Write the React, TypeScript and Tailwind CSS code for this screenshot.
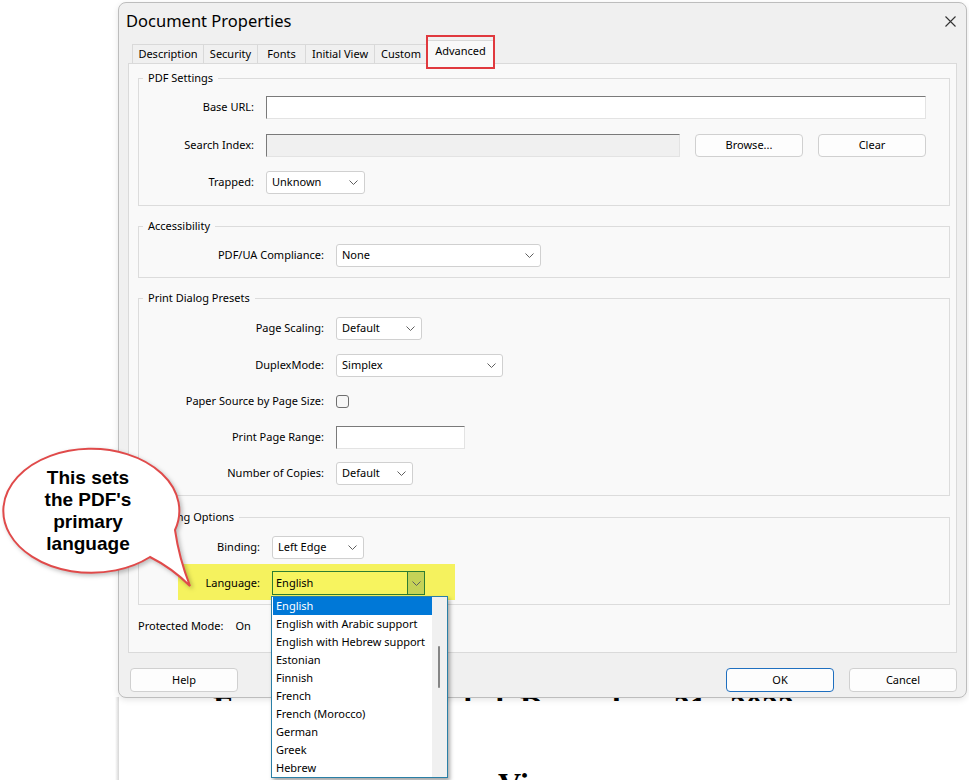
import React from "react";

const languages = [
  "English",
  "English with Arabic support",
  "English with Hebrew support",
  "Estonian",
  "Finnish",
  "French",
  "French (Morocco)",
  "German",
  "Greek",
  "Hebrew",
];

const tabs = [
  { name: "Description", w: "w-[71px]" },
  { name: "Security", w: "w-[54px]" },
  { name: "Fonts", w: "w-[48px]" },
  { name: "Initial View", w: "w-[69px]" },
  { name: "Custom", w: "w-[53px]" },
];

function Chevron() {
  return (
    <svg width="9" height="5" viewBox="0 0 9 5">
      <path d="M0.5 0.5 L4.5 4.5 L8.5 0.5" fill="none" stroke="#5f5f5f" strokeWidth="1" />
    </svg>
  );
}

function Select({ value, width }: { value: string; width: string }) {
  return (
    <div
      className={`flex h-[23px] items-center justify-between rounded-[3px] border border-[#d0d0d0] bg-white pl-[5px] pr-[6px] ${width}`}
    >
      <span>{value}</span>
      <Chevron />
    </div>
  );
}

function Sunken({ width, gray }: { width: string; gray?: boolean }) {
  return (
    <div
      className={`h-[23px] border border-[#e3e3e3] border-l-[#7a7a7a] border-t-[#7a7a7a] ${gray ? "bg-[#f0f0f0]" : "bg-white"} ${width}`}
    />
  );
}

function Button({ label, primary }: { label: string; primary?: boolean }) {
  return (
    <div
      className={`flex h-[24px] w-[108px] items-center justify-center rounded-[4px] border bg-[#fdfdfd] ${primary ? "border-[#1f6fbf]" : "border-[#d0d0d0]"}`}
    >
      {label}
    </div>
  );
}

function Row({
  label,
  labelW,
  children,
  className = "",
}: {
  label: string;
  labelW: string;
  children: React.ReactNode;
  className?: string;
}) {
  return (
    <div className={`flex h-[23px] items-center gap-[12px] ${className}`}>
      <div className={`shrink-0 text-right ${labelW}`}>{label}</div>
      {children}
    </div>
  );
}

function Group({
  title,
  children,
  className = "",
}: {
  title: string;
  children: React.ReactNode;
  className?: string;
}) {
  return (
    <fieldset className={`border border-[#dcdcdc] ${className}`}>
      <legend className="ml-[4px] px-[5px] leading-[16px]">{title}</legend>
      {children}
    </fieldset>
  );
}

export default function App() {
  return (
    <div className="relative h-[780px] w-[969px] overflow-hidden bg-white font-['Noto_Sans',sans-serif] text-[11px] text-black">
      {/* page behind the dialog */}
      <div className="absolute left-[115px] top-[697px] h-[83px] w-[4px] bg-gradient-to-r from-white to-[#d6d6d6]" />
      <div className="absolute left-[213px] top-[691px] h-[10px] overflow-hidden whitespace-nowrap font-['Liberation_Serif',serif] text-[32px] font-bold leading-[32px] [word-spacing:8px]">
        For the Year Ended December 31, 2022
      </div>
      <div className="absolute left-[498px] top-[768px] font-['Liberation_Serif',serif] text-[32px] font-bold leading-[32px]">
        Vi
      </div>

      {/* dialog */}
      <div className="absolute left-[118px] top-[2px] flex h-[696px] w-[849px] flex-col rounded-[8px] border border-[#bdbdbd] bg-[#f0f0f0] shadow-[0_2px_6px_rgba(0,0,0,0.1)]">
        <div className="flex h-[41px] items-center justify-between pb-[5px] pl-[7px] pr-[10px]">
          <span className="text-[16.5px]">Document Properties</span>
          <svg width="11" height="11" viewBox="0 0 11 11">
            <path d="M0.5 0.5 L10.5 10.5 M10.5 0.5 L0.5 10.5" stroke="#333" strokeWidth="1.1" />
          </svg>
        </div>

        {/* tabs */}
        <div className="relative z-10 flex h-[19px] items-end pl-[13px]">
          {tabs.map((t) => (
            <div
              key={t.name}
              className={`flex h-[19px] items-center justify-center border-l border-t border-[#d9d9d9] ${t.w}`}
            >
              {t.name}
            </div>
          ))}
          <div className="-mb-px flex h-[24px] w-[67px] items-center justify-center border-x border-t border-[#d9d9d9] bg-[#f9f9f9] pb-[2px]">
            Advanced
          </div>
        </div>

        {/* tab panel */}
        <div className="ml-[9px] flex h-[590px] w-[829px] flex-col border border-[#dadada] bg-[#f9f9f9] pl-[9px] pr-[6px] pt-[6px]">
          <Group title="PDF Settings">
            <div className="flex flex-col pb-[11px] pt-[10px]">
              <Row label="Base URL:" labelW="w-[115px]">
                <Sunken width="w-[660px]" />
              </Row>
              <Row label="Search Index:" labelW="w-[115px]" className="mt-[15px]">
                <Sunken width="w-[414px]" gray />
                <div className="ml-[3px] flex gap-[15px]">
                  <div className="flex h-[23px] w-[108px] items-center justify-center rounded-[4px] border border-[#d0d0d0] bg-[#fdfdfd]">
                    Browse...
                  </div>
                  <div className="flex h-[23px] w-[108px] items-center justify-center rounded-[4px] border border-[#d0d0d0] bg-[#fdfdfd]">
                    Clear
                  </div>
                </div>
              </Row>
              <Row label="Trapped:" labelW="w-[115px]" className="mt-[14px]">
                <Select value="Unknown" width="w-[99px]" />
              </Row>
            </div>
          </Group>

          <Group title="Accessibility" className="mt-[12px]">
            <div className="pb-[10px] pt-[10px]">
              <Row label="PDF/UA Compliance:" labelW="w-[185px]">
                <Select value="None" width="w-[205px]" />
              </Row>
            </div>
          </Group>

          <Group title="Print Dialog Presets" className="mt-[12px]">
            <div className="flex flex-col gap-[13px] pb-[10px] pt-[11px]">
              <Row label="Page Scaling:" labelW="w-[185px]">
                <Select value="Default" width="w-[86px]" />
              </Row>
              <Row label="DuplexMode:" labelW="w-[185px]" className="mt-[1px]">
                <Select value="Simplex" width="w-[167px]" />
              </Row>
              <Row label="Paper Source by Page Size:" labelW="w-[185px]">
                <div className="h-[13px] w-[13px] rounded-[3px] border border-[#6f6f6f] bg-[#f7f7f7]" />
              </Row>
              <Row label="Print Page Range:" labelW="w-[185px]">
                <Sunken width="w-[129px]" />
              </Row>
              <Row label="Number of Copies:" labelW="w-[185px]">
                <Select value="Default" width="w-[77px]" />
              </Row>
            </div>
          </Group>

          <Group title="Reading Options" className="mt-[13px]">
            <div className="flex flex-col gap-[12px] pb-[9px] pt-[11px]">
              <Row label="Binding:" labelW="w-[121px]">
                <Select value="Left Edge" width="w-[92px]" />
              </Row>
              <div className="relative flex h-[24px] items-center gap-[12px]">
                <div className="absolute left-[39px] top-[-7px] h-[36px] w-[277px] bg-[#f5f25e]" />
                <div className="relative w-[121px] text-right">Language:</div>
                <div className="relative flex h-[24px] w-[153px] items-center border border-[#2d7d32] bg-[#f7f45f]">
                  <span className="flex-1 pl-[3px]">English</span>
                  <div className="flex h-full w-[17px] items-center justify-center border-l border-[#2d7d32] bg-[#c5d257]">
                    <Chevron />
                  </div>
                </div>
              </div>
            </div>
          </Group>

          <div className="mt-[13px] flex gap-[12px] leading-[16px]">
            <span>Protected Mode:</span>
            <span>On</span>
          </div>
        </div>

        {/* bottom buttons */}
        <div className="mt-[15px] flex items-center justify-between pl-[11px] pr-[9px]">
          <Button label="Help" />
          <div className="flex gap-[15px]">
            <Button label="OK" primary />
            <Button label="Cancel" />
          </div>
        </div>
      </div>

      {/* annotation around the Advanced tab */}
      <div className="absolute left-[426px] top-[35px] z-20 h-[34px] w-[69px] border-2 border-[#e0393e]" />

      {/* open language list */}
      <div className="absolute left-[271px] top-[596px] z-20 flex h-[182px] w-[177px] border border-[#2a7fa6] bg-white shadow-[2px_3px_4px_rgba(0,0,0,0.35)]">
        <div className="w-[160px] pl-[1px]">
          {languages.map((l, i) => (
            <div
              key={l}
              className={
                i === 0
                  ? "h-[18px] bg-[#0078d7] pl-[3px] leading-[18px] text-white"
                  : "h-[18px] pl-[3px] leading-[18px]"
              }
            >
              {l}
            </div>
          ))}
        </div>
        <div className="relative flex-1 bg-[#f0f0f0]">
          <div className="absolute left-[6px] top-[49px] h-[42px] w-[2px] rounded-full bg-[#858585]" />
        </div>
      </div>

      {/* callout */}
      <div className="absolute left-0 top-[440px] z-30 h-[160px] w-[200px]">
        <svg
          width="200"
          height="160"
          viewBox="0 0 200 160"
          className="absolute inset-0 drop-shadow-[2px_2px_2px_rgba(0,0,0,0.25)]"
        >
          <path
            d="M175 90 A88 62 0 1 0 150 117 Q172 128 190 146 Q179 118 175 90 Z"
            fill="white"
            stroke="#e04a4a"
            strokeWidth="2"
          />
        </svg>
        <div className="absolute left-0 top-[27px] w-[176px] text-center font-['Liberation_Sans',Arial,sans-serif] text-[19px] font-bold leading-[22px]">
          This sets
          <br />
          the PDF's
          <br />
          primary
          <br />
          language
        </div>
      </div>
    </div>
  );
}
